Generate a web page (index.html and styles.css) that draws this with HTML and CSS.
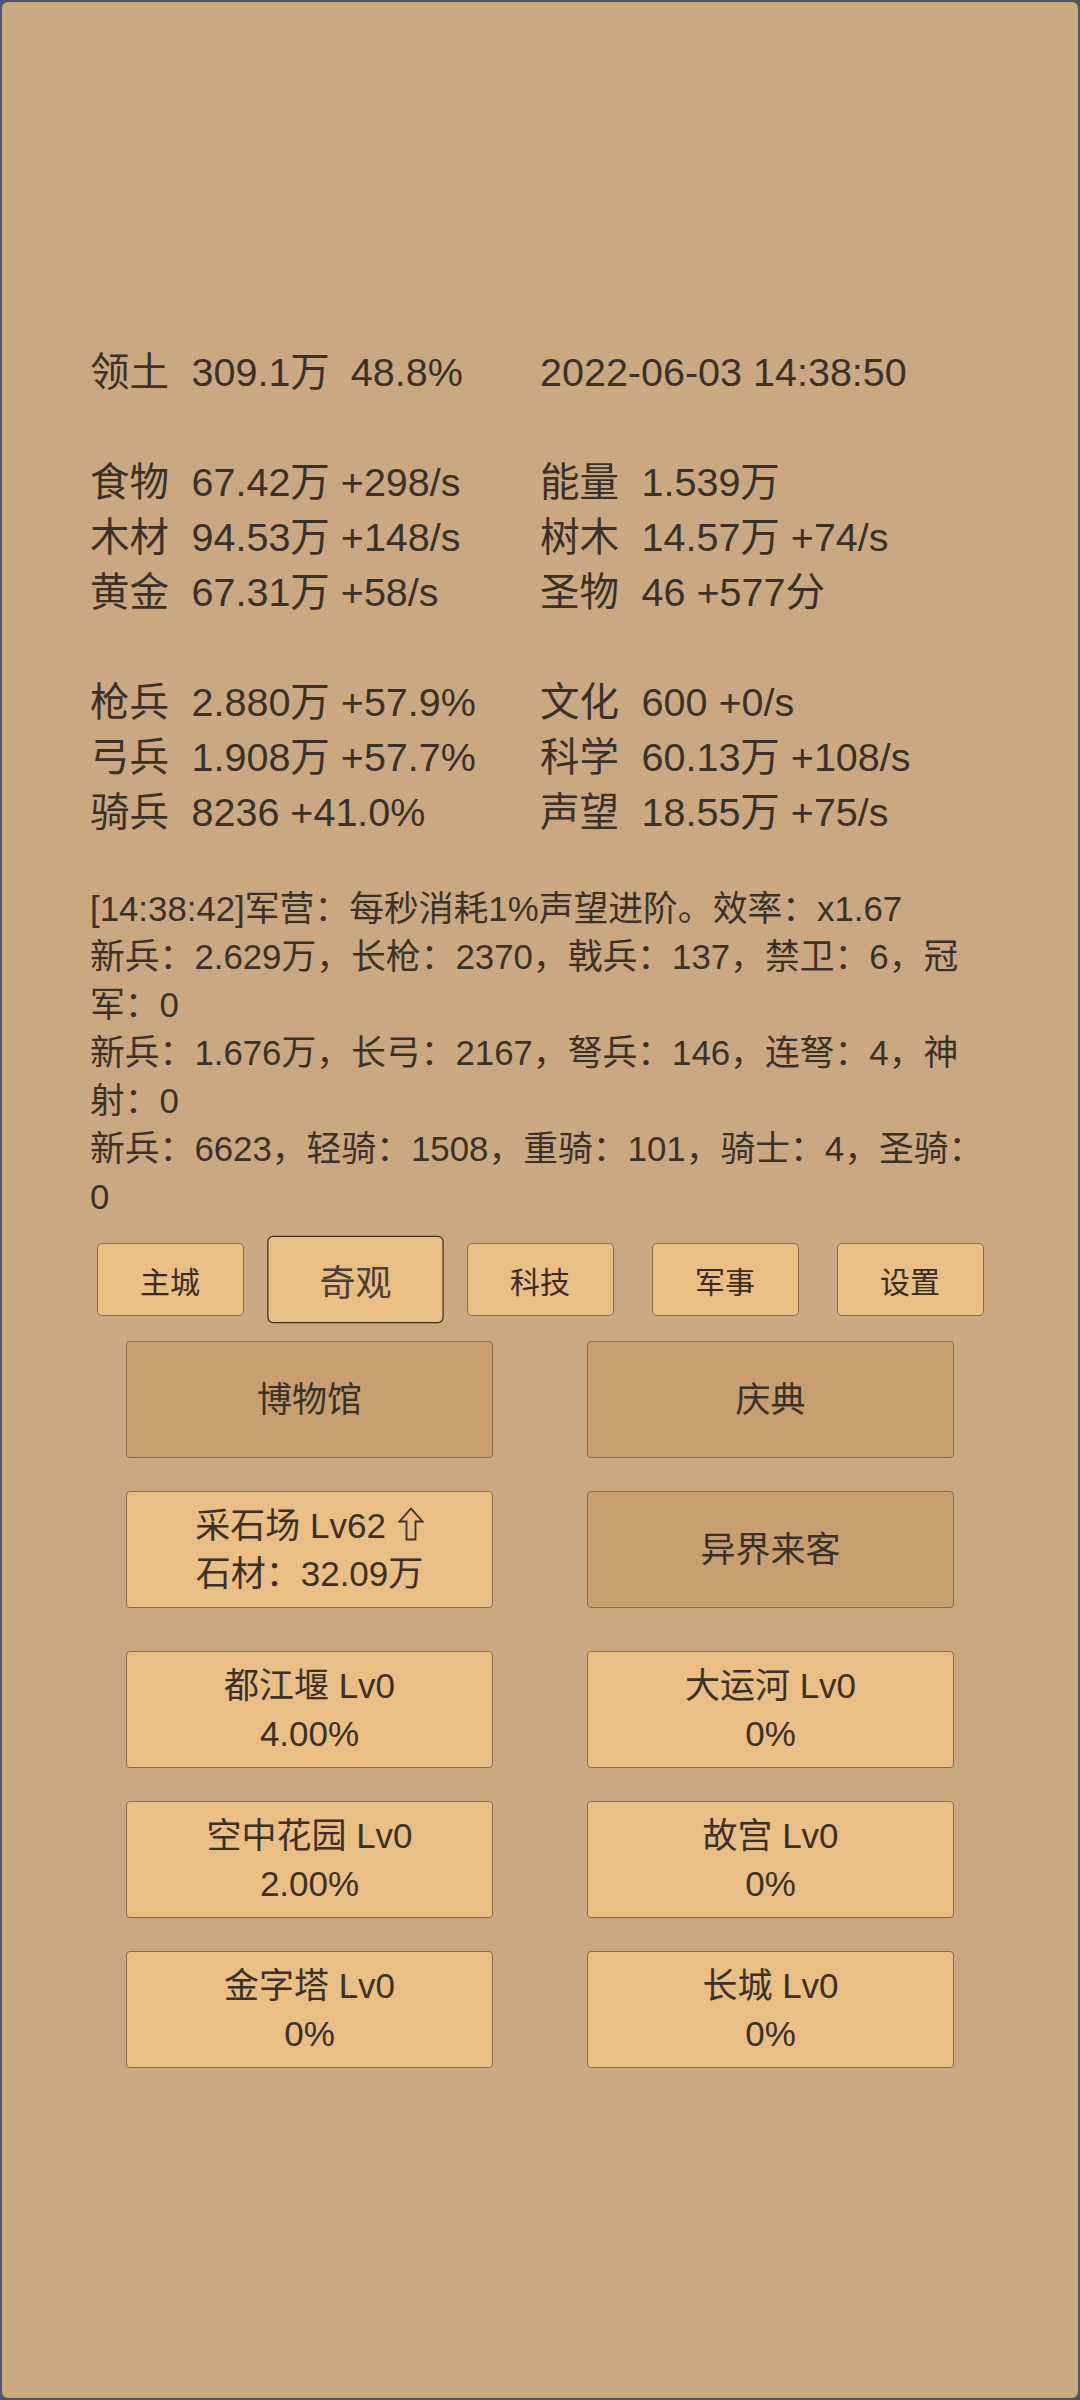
FILE: index.html
```html
<!DOCTYPE html>
<html lang="zh-CN">
<head>
<meta charset="utf-8">
<title>奇观</title>
<link rel="stylesheet" href="styles.css">
</head>
<body>
<div class="frame">
  <section class="stats">
    <div class="group">
      <div class="cell"><span class="lbl">领土</span><span class="val">309.1万</span><span class="val2">48.8%</span></div>
      <div class="cell"><span class="val">2022-06-03 14:38:50</span></div>
    </div>
    <div class="group">
      <div class="cell"><span class="lbl">食物</span><span class="val">67.42万 +298/s</span></div>
      <div class="cell"><span class="lbl">能量</span><span class="val">1.539万</span></div>
      <div class="cell"><span class="lbl">木材</span><span class="val">94.53万 +148/s</span></div>
      <div class="cell"><span class="lbl">树木</span><span class="val">14.57万 +74/s</span></div>
      <div class="cell"><span class="lbl">黄金</span><span class="val">67.31万 +58/s</span></div>
      <div class="cell"><span class="lbl">圣物</span><span class="val">46 +577分</span></div>
    </div>
    <div class="group">
      <div class="cell"><span class="lbl">枪兵</span><span class="val">2.880万 +57.9%</span></div>
      <div class="cell"><span class="lbl">文化</span><span class="val">600 +0/s</span></div>
      <div class="cell"><span class="lbl">弓兵</span><span class="val">1.908万 +57.7%</span></div>
      <div class="cell"><span class="lbl">科学</span><span class="val">60.13万 +108/s</span></div>
      <div class="cell"><span class="lbl">骑兵</span><span class="val">8236 +41.0%</span></div>
      <div class="cell"><span class="lbl">声望</span><span class="val">18.55万 +75/s</span></div>
    </div>
  </section>

  <section class="log">
    <p>[14:38:42]军营：每秒消耗1%声望进阶。效率：x1.67</p>
    <p>新兵：2.629万，长枪：2370，戟兵：137，禁卫：6，冠军：0</p>
    <p>新兵：1.676万，长弓：2167，弩兵：146，连弩：4，神射：0</p>
    <p>新兵：6623，轻骑：1508，重骑：101，骑士：4，圣骑：0</p>
  </section>

  <nav class="tabs">
    <div class="tab">主城</div>
    <div class="tab active">奇观</div>
    <div class="tab">科技</div>
    <div class="tab">军事</div>
    <div class="tab">设置</div>
  </nav>

  <section class="grid top-grid">
    <div class="btn dark">博物馆</div>
    <div class="btn dark">庆典</div>
    <div class="btn"><span>采石场 Lv62 <svg class="arrow" viewBox="0 0 26 34" width="26" height="34" aria-hidden="true"><path d="M13 1.5 L24.5 14.5 H17.5 V32.5 H8.5 V14.5 H1.5 Z" fill="none" stroke="#3a3128" stroke-width="1.8" stroke-linejoin="miter"/></svg></span><span>石材：32.09万</span></div>
    <div class="btn dark">异界来客</div>
  </section>

  <section class="grid wonders">
    <div class="btn"><span>都江堰 Lv0</span><span>4.00%</span></div>
    <div class="btn"><span>大运河 Lv0</span><span>0%</span></div>
    <div class="btn"><span>空中花园 Lv0</span><span>2.00%</span></div>
    <div class="btn"><span>故宫 Lv0</span><span>0%</span></div>
    <div class="btn"><span>金字塔 Lv0</span><span>0%</span></div>
    <div class="btn"><span>长城 Lv0</span><span>0%</span></div>
  </section>
</div>
</body>
</html>
```

FILE: styles.css
```css
html, body {
  margin: 0;
  padding: 0;
  background: #4f5567;
}

body {
  font-family: "Liberation Sans", "Noto Sans CJK SC", sans-serif;
  color: #3a322a;
}

.frame {
  box-sizing: border-box;
  width: 1080px;
  height: 2400px;
  border: 2px solid #4f5567;
  border-radius: 8px;
  background: #caa982;
  padding: 343px 88px 0 88px;
  overflow: hidden;
}

.stats {
  font-size: 39.5px;
  line-height: 55px;
}

.group {
  display: grid;
  grid-template-columns: 450px 450px;
  margin-bottom: 55px;
}

.group:last-child {
  margin-bottom: 0;
}

.cell {
  white-space: nowrap;
}

.lbl {
  margin-right: 22.5px;
}

.val2 {
  margin-left: 21px;
}

.log {
  margin-top: 45px;
  width: 900px;
  font-size: 34.8px;
  line-height: 48px;
}

.log p {
  margin: 0;
}

.tabs {
  margin-top: 22px;
  margin-left: -88px;
  margin-right: -88px;
  display: flex;
  justify-content: center;
  gap: 38px;
}

.tab {
  box-sizing: border-box;
  width: 147px;
  height: 73px;
  display: flex;
  align-items: center;
  justify-content: center;
  background: #e9bf85;
  border: 1px solid #8b6a47;
  border-radius: 5px;
  font-size: 30px;
  color: #3a2c20;
}

.tab.active {
  transform: scale(1.2);
  border-color: #3a2818;
  color: #4a4036;
}

.grid {
  margin-left: -88px;
  margin-right: -88px;
  display: grid;
  grid-template-columns: 367px 367px;
  justify-content: center;
  column-gap: 94px;
  row-gap: 33px;
}

.top-grid {
  margin-top: 25px;
}

.wonders {
  margin-top: 43px;
}

.btn {
  box-sizing: border-box;
  height: 117px;
  display: flex;
  flex-direction: column;
  align-items: center;
  justify-content: center;
  background: #e9bf85;
  border: 1px solid #8b6a47;
  border-radius: 4px;
  font-size: 35px;
  line-height: 48px;
  color: #3a3128;
}

.btn.dark {
  background: #c89f70;
}

.arrow {
  width: 26px;
  height: 34px;
  vertical-align: -3px;
  margin-left: 2px;
}
```
